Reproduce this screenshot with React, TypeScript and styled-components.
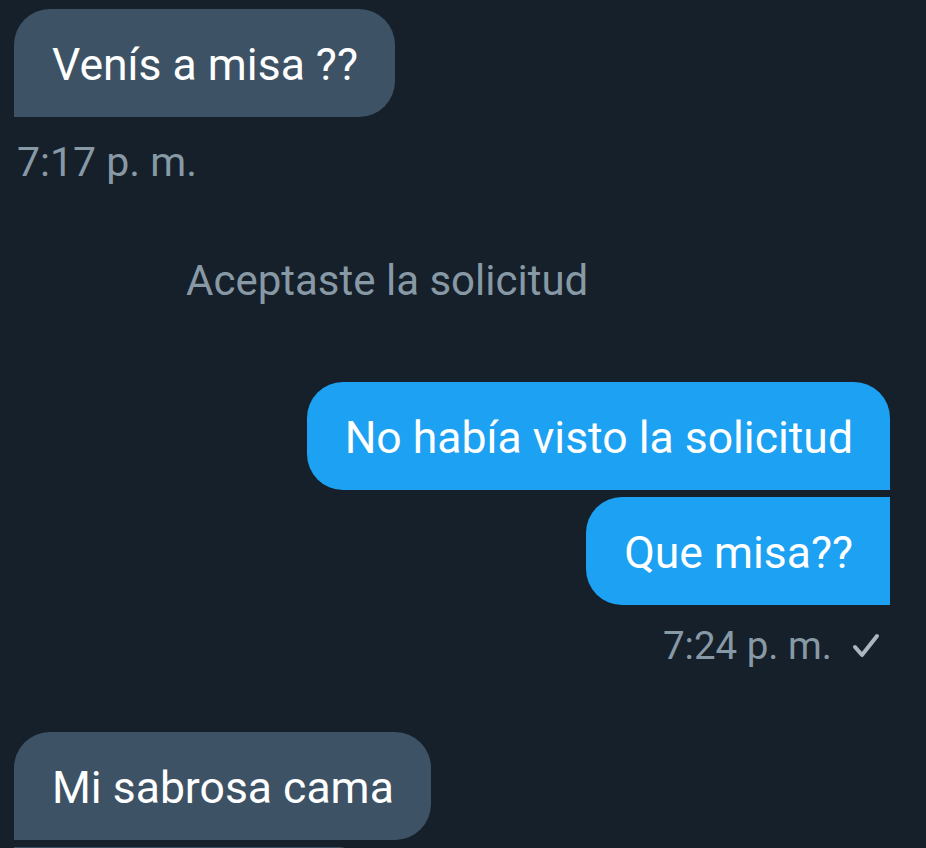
import React from "react";
import styled, { createGlobalStyle, css } from "styled-components";

const Global = createGlobalStyle`
  html, body {
    margin: 0;
    padding: 0;
    background: #16202a;
    overflow: hidden;
  }
  body {
    font-family: Roboto, "Noto Sans", "Liberation Sans", sans-serif;
  }
`;

const Thread = styled.div`
  display: flex;
  flex-direction: column;
  height: 848px;
  overflow: hidden;
  padding: 9px 36px 0 14px;
  box-sizing: border-box;
  background: #16202a;
`;

type Corners = { tl?: boolean; tr?: boolean; br?: boolean; bl?: boolean };

const R = 36;

const Bubble = styled.div<{ $mine?: boolean; $c: Corners; $gap?: number; $w?: number }>`
  align-self: ${(p) => (p.$mine ? "flex-end" : "flex-start")};
  margin-top: ${(p) => p.$gap ?? 0}px;
  background: ${(p) => (p.$mine ? "#1da1f2" : "#3d5365")};
  color: #ffffff;
  font-size: 44.5px;
  line-height: 48px;
  min-height: 48px;
  padding: 32px 37px 28px 38px;
  white-space: nowrap;
  ${(p) =>
    p.$w &&
    css`
      width: ${p.$w}px;
      box-sizing: border-box;
    `}
  ${(p) => css`
    border-radius: ${p.$c.tl ? R : 0}px ${p.$c.tr ? R : 0}px ${p.$c.br ? R : 0}px
      ${p.$c.bl ? R : 0}px;
  `}
`;

const Stamp = styled.div<{ $mine?: boolean; $gap: number; $size: number }>`
  align-self: ${(p) => (p.$mine ? "flex-end" : "flex-start")};
  display: flex;
  align-items: center;
  gap: 20px;
  margin-top: ${(p) => p.$gap}px;
  margin-left: ${(p) => (p.$mine ? 0 : 3)}px;
  margin-right: ${(p) => (p.$mine ? 10 : 0)}px;
  color: #8899a6;
  font-size: ${(p) => p.$size}px;
  line-height: 44px;
`;

const Notice = styled.div`
  align-self: flex-start;
  margin-left: 172px;
  margin-top: 75px;
  color: #8899a6;
  font-size: 42px;
  line-height: 44px;
`;

const Check = () => (
  <svg width="28" height="26" viewBox="0 0 28 26" fill="none">
    <polyline
      points="3,14 10,22 25,3"
      stroke="#aab6c0"
      strokeWidth="4"
      strokeLinecap="round"
      strokeLinejoin="round"
    />
  </svg>
);

export default function App() {
  return (
    <>
      <Global />
      <Thread>
        <Bubble $c={{ tl: true, tr: true, br: true }}>Venís a misa ??</Bubble>
        <Stamp $gap={23} $size={41}>
          7:17 p. m.
        </Stamp>
        <Notice>Aceptaste la solicitud</Notice>
        <Bubble $mine $gap={79} $c={{ tl: true, tr: true, bl: true }}>
          No había visto la solicitud
        </Bubble>
        <Bubble $mine $gap={7} $c={{ tl: true, bl: true }}>
          Que misa??
        </Bubble>
        <Stamp $mine $gap={19} $size={38.5}>
          <span>7:24 p. m.</span>
          <Check />
        </Stamp>
        <Bubble $gap={64} $c={{ tl: true, tr: true, br: true }}>
          Mi sabrosa cama
        </Bubble>
        <Bubble $gap={7} $w={354} $c={{ tr: true, br: true, bl: true }} />
      </Thread>
    </>
  );
}
